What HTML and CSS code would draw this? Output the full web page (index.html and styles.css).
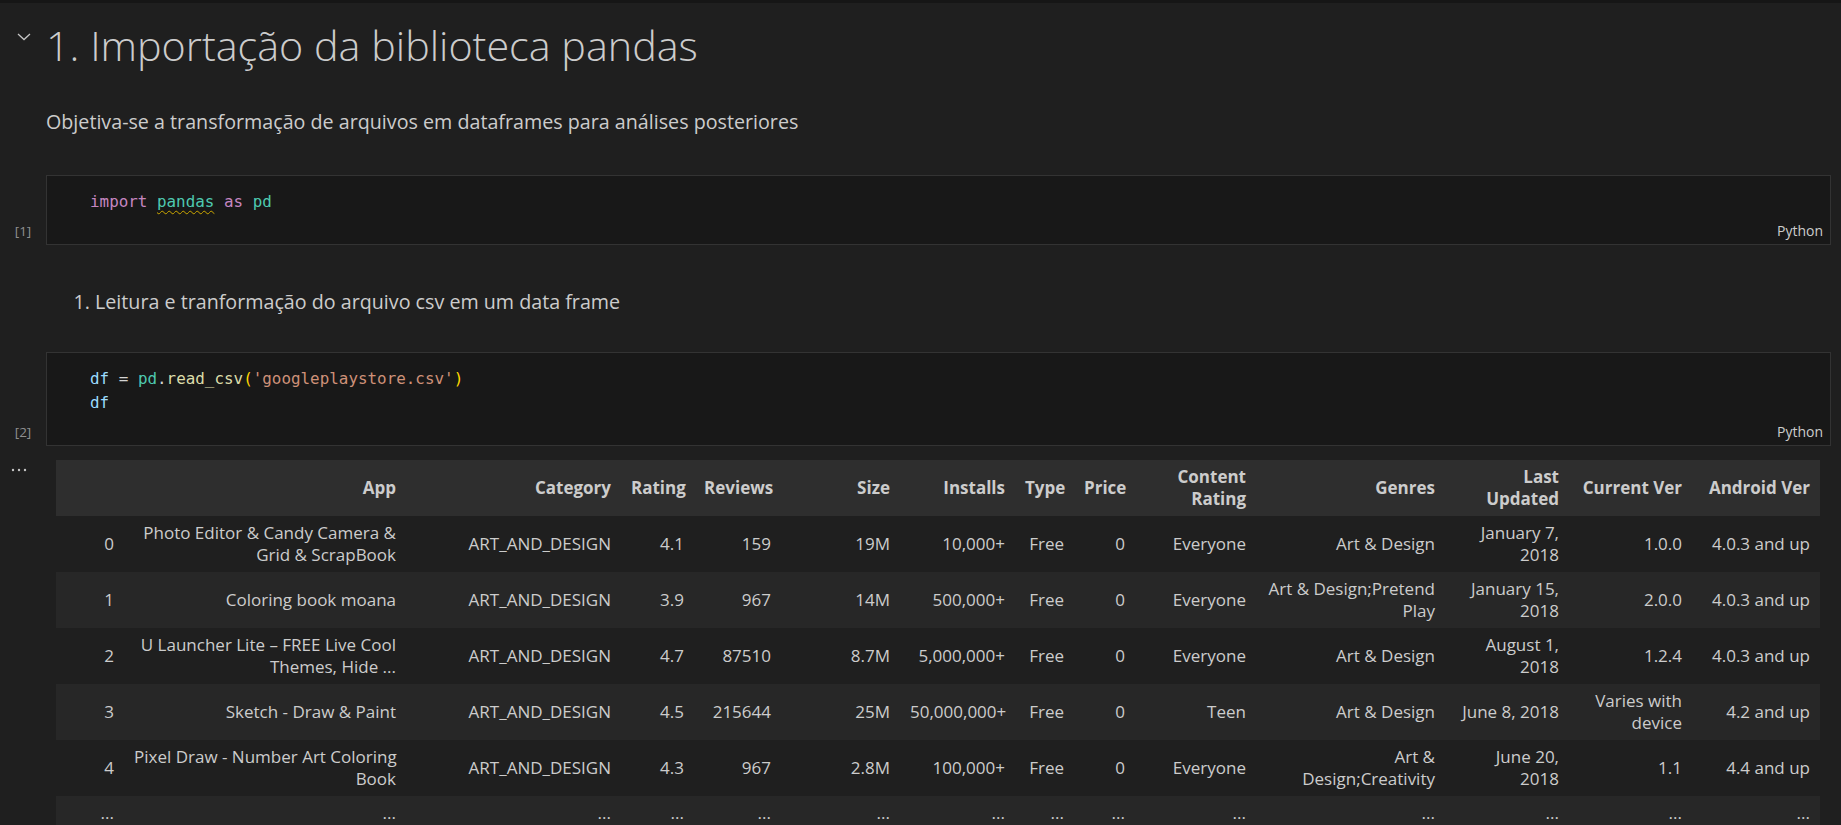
FILE: index.html
```html
<!DOCTYPE html>
<html lang="pt">
<head>
<meta charset="utf-8">
<title>Notebook</title>
<link rel="stylesheet" href="styles.css">
</head>
<body>
<div class="topbar"></div>
<div class="nb">
  <div class="row md-heading">
    <div class="gutter chev-gutter">
      <svg class="chev" width="14" height="8" viewBox="0 0 14 8"><polyline points="1,1 7,6.5 13,1" fill="none" stroke="#c5c5c5" stroke-width="1.3"/></svg>
    </div>
    <h1 class="h1">1. Importação da biblioteca pandas</h1>
  </div>

  <div class="row md-para">
    <div class="gutter"></div>
    <p class="para">Objetiva-se a transformação de arquivos em dataframes para análises posteriores</p>
  </div>

  <div class="row cell-row cell-1">
    <div class="gutter exec"><span class="exec-count">[1]</span></div>
    <div class="code-cell">
      <div class="code"><span class="kw">import</span> <span class="mod squig">pandas</span> <span class="kw">as</span> <span class="mod">pd</span></div>
      <div class="lang">Python</div>
    </div>
  </div>

  <div class="row md-list">
    <div class="gutter"></div>
    <ol class="list"><li>Leitura e tranformação do arquivo csv em um data frame</li></ol>
  </div>

  <div class="row cell-row cell-2">
    <div class="gutter exec"><span class="exec-count">[2]</span></div>
    <div class="code-cell">
      <div class="code"><span class="var">df</span> <span class="op">=</span> <span class="mod">pd</span><span class="op">.</span><span class="fn">read_csv</span><span class="paren">(</span><span class="str">'googleplaystore.csv'</span><span class="paren">)</span><br><span class="var">df</span></div>
      <div class="lang">Python</div>
    </div>
  </div>

  <div class="row output-row">
    <div class="gutter out-gutter">
      <svg class="dots" width="16" height="4" viewBox="0 0 16 4"><circle cx="2" cy="2" r="1.2" fill="#c5c5c5"/><circle cx="8" cy="2" r="1.2" fill="#c5c5c5"/><circle cx="14" cy="2" r="1.2" fill="#c5c5c5"/></svg>
    </div>
    <table class="df">
      <colgroup>
        <col class="c-idx"><col class="c-app"><col class="c-cat"><col class="c-rat"><col class="c-rev"><col class="c-size"><col class="c-inst"><col class="c-type"><col class="c-price"><col class="c-cr"><col class="c-gen"><col class="c-lu"><col class="c-cv"><col class="c-av">
      </colgroup>
      <thead>
        <tr><th></th><th>App</th><th>Category</th><th>Rating</th><th>Reviews</th><th>Size</th><th>Installs</th><th>Type</th><th>Price</th><th>Content<br>Rating</th><th>Genres</th><th>Last<br>Updated</th><th>Current Ver</th><th>Android Ver</th></tr>
      </thead>
      <tbody>
        <tr><td>0</td><td>Photo Editor &amp; Candy Camera &amp;<br>Grid &amp; ScrapBook</td><td>ART_AND_DESIGN</td><td>4.1</td><td>159</td><td>19M</td><td>10,000+</td><td>Free</td><td>0</td><td>Everyone</td><td>Art &amp; Design</td><td>January 7,<br>2018</td><td>1.0.0</td><td>4.0.3 and up</td></tr>
        <tr><td>1</td><td>Coloring book moana</td><td>ART_AND_DESIGN</td><td>3.9</td><td>967</td><td>14M</td><td>500,000+</td><td>Free</td><td>0</td><td>Everyone</td><td>Art &amp; Design;Pretend<br>Play</td><td>January 15,<br>2018</td><td>2.0.0</td><td>4.0.3 and up</td></tr>
        <tr><td>2</td><td>U Launcher Lite – FREE Live Cool<br>Themes, Hide ...</td><td>ART_AND_DESIGN</td><td>4.7</td><td>87510</td><td>8.7M</td><td>5,000,000+</td><td>Free</td><td>0</td><td>Everyone</td><td>Art &amp; Design</td><td>August 1,<br>2018</td><td>1.2.4</td><td>4.0.3 and up</td></tr>
        <tr><td>3</td><td>Sketch - Draw &amp; Paint</td><td>ART_AND_DESIGN</td><td>4.5</td><td>215644</td><td>25M</td><td>50,000,000+</td><td>Free</td><td>0</td><td>Teen</td><td>Art &amp; Design</td><td>June 8, 2018</td><td>Varies with<br>device</td><td>4.2 and up</td></tr>
        <tr><td>4</td><td>Pixel Draw - Number Art Coloring<br>Book</td><td>ART_AND_DESIGN</td><td>4.3</td><td>967</td><td>2.8M</td><td>100,000+</td><td>Free</td><td>0</td><td>Everyone</td><td>Art &amp;<br>Design;Creativity</td><td>June 20,<br>2018</td><td>1.1</td><td>4.4 and up</td></tr>
        <tr><td>...</td><td>...</td><td>...</td><td>...</td><td>...</td><td>...</td><td>...</td><td>...</td><td>...</td><td>...</td><td>...</td><td>...</td><td>...</td><td>...</td></tr>
      </tbody>
    </table>
  </div>
</div>
</body>
</html>
```

FILE: styles.css
```css
html, body {
  margin: 0;
  padding: 0;
}
body {
  width: 1841px;
  height: 825px;
  overflow: hidden;
  background: #1f1f1f;
  color: #cccccc;
  font-family: "Open Sans", "Noto Sans", sans-serif;
}
.topbar {
  height: 3px;
  background: #161616;
}
.nb {
  display: flex;
  flex-direction: column;
}
.row {
  display: flex;
  align-items: flex-start;
}
.gutter {
  flex: 0 0 46px;
  width: 46px;
}
.chev-gutter {
  padding-top: 12px;
}
.chev {
  display: block;
  margin-left: 17px;
}
.md-heading {
  padding-top: 18px;
}
.h1 {
  margin: 0;
  font-size: 41.3px;
  font-weight: 300;
  line-height: 48px;
  color: #cccccc;
}
.md-para {
  margin-top: 39px;
}
.para {
  margin: 0;
  font-size: 19.7px;
  line-height: 28px;
}
.cell-row {
  align-items: stretch;
  padding-right: 10px;
}
.cell-1 {
  margin-top: 39px;
}
.cell-2 {
  margin-top: 36px;
}
.exec {
  display: flex;
  align-items: flex-end;
  justify-content: center;
  padding-bottom: 5px;
  box-sizing: border-box;
}
.exec-count {
  font-size: 13.5px;
  line-height: 18px;
  color: #8f8f8f;
  font-family: "Open Sans", sans-serif;
}
.code-cell {
  flex: 1;
  background: #181818;
  border: 1px solid #333333;
}
.code {
  padding: 14px 0 0 43px;
  font-family: "DejaVu Sans Mono", "Liberation Mono", monospace;
  font-size: 15.9px;
  line-height: 24px;
  color: #d4d4d4;
  white-space: pre;
}
.kw { color: #c586c0; }
.mod { color: #4ec9b0; }
.var { color: #9cdcfe; }
.op { color: #d4d4d4; }
.fn { color: #dcdcaa; }
.paren { color: #ffd700; }
.str { color: #ce9178; }
.squig {
  text-decoration: underline wavy #cca700;
  text-decoration-thickness: 1px;
  text-underline-offset: 3px;
}
.lang {
  margin-top: 7px;
  padding: 0 7px 3px 0;
  text-align: right;
  font-size: 14px;
  line-height: 20px;
  color: #cccccc;
}
.md-list {
  margin-top: 43px;
}
.list {
  margin: 0;
  padding: 0 0 0 49px;
  font-size: 19.7px;
  line-height: 28px;
}
.output-row {
  margin-top: 14px;
}
.out-gutter {
  padding-top: 8px;
}
.dots {
  display: block;
  margin-left: 11px;
}
.df {
  margin-left: 10px;
  width: 1764px;
  table-layout: fixed;
  border-collapse: collapse;
  border-spacing: 0;
  font-size: 17px;
  color: #cccccc;
}
.df th, .df td {
  padding: 6px 10px;
  text-align: right;
  vertical-align: middle;
  white-space: nowrap;
  line-height: 22px;
}
.df th {
  font-weight: 700;
}
.df thead tr { background: #2e2e2e; }
.df tbody tr:nth-child(odd) { background: #1f1f1f; }
.df tbody tr:nth-child(even) { background: #272727; }
.df thead th, .df tbody tr:not(:last-child) td {
  height: 56px;
  box-sizing: border-box;
}
.c-idx { width: 68px; }
.c-app { width: 282px; }
.c-cat { width: 215px; }
.c-rat { width: 73px; }
.c-rev { width: 87px; }
.c-size { width: 119px; }
.c-inst { width: 115px; }
.c-type { width: 59px; }
.c-price { width: 61px; }
.c-cr { width: 121px; }
.c-gen { width: 189px; }
.c-lu { width: 124px; }
.c-cv { width: 123px; }
.c-av { width: 128px; }
```
